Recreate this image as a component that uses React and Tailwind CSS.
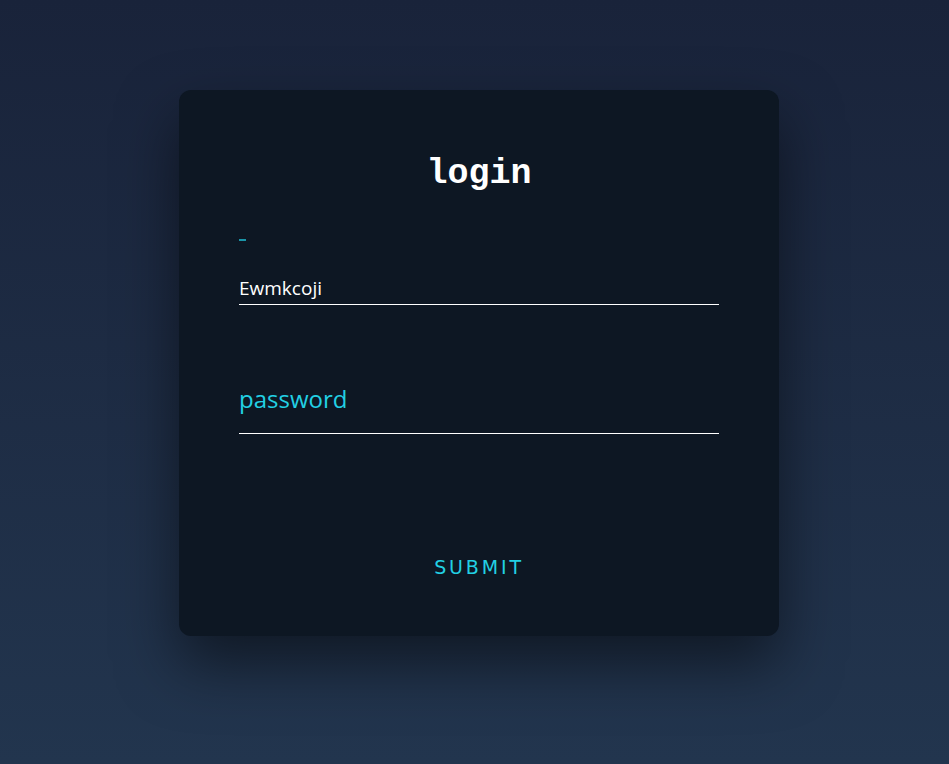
import React, { useState } from 'react';

const App = () => {
  const [username, setUsername] = useState('Ewmkcoji');
  const [password, setPassword] = useState('');

  return (
    <div className="min-h-screen w-full bg-gradient-to-b from-[#19233a] to-[#22354e] flex justify-center pl-[9px] pt-[90px] font-['Open_Sans',sans-serif]">
      {/* Card */}
      <form
        onSubmit={(e) => e.preventDefault()}
        className="w-[600px] h-[546px] bg-[#0d1723] rounded-xl shadow-[0_28px_60px_rgba(0,0,0,0.5)] px-[60px] pt-[64px] flex flex-col"
      >
        <h1 className="text-center text-white text-[35px] font-bold font-['Liberation_Mono',monospace] leading-10">
          login
        </h1>

        {/* Username */}
        <div className="mt-[45px]">
          <div className="w-[7px] h-[2px] bg-[#1a95a8] mb-[35px]" />
          <input
            value={username}
            onChange={(e) => setUsername(e.target.value)}
            className="w-full bg-transparent text-white text-[19px] leading-6 pb-1 border-b border-white outline-none"
            type="text"
          />
        </div>

        {/* Password */}
        <div className="mt-[78px]">
          <input
            value={password}
            onChange={(e) => setPassword(e.target.value)}
            placeholder="password"
            className="w-full bg-transparent text-white text-[24px] leading-8 pb-[18px] border-b border-white outline-none placeholder:text-[#22d0e4]"
            type="password"
          />
        </div>

        {/* Submit */}
        <button
          type="submit"
          className="mt-[119px] self-center text-[#22d0e4] text-[19px] tracking-[0.15em] font-['DejaVu_Sans',sans-serif]"
        >
          SUBMIT
        </button>
      </form>
    </div>
  );
};

export default App;
